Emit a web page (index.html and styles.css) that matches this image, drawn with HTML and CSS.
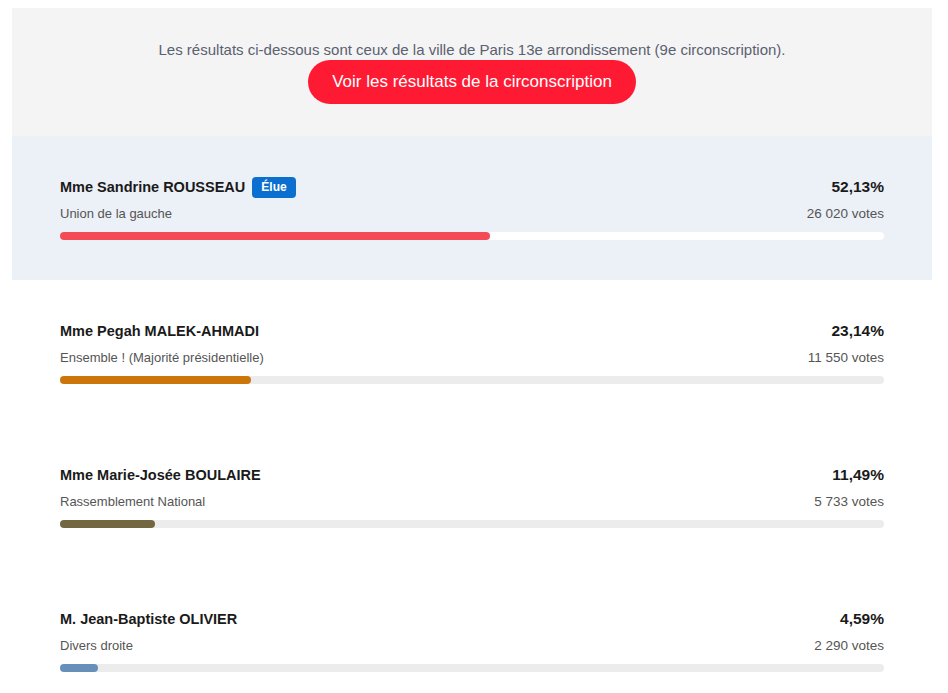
FILE: index.html
```html
<!DOCTYPE html>
<html lang="fr">
<head>
  <meta charset="UTF-8">
  <meta name="viewport" content="width=device-width, initial-scale=1.0">
  <title>Résultats Paris 13e</title>
  <link rel="stylesheet" href="styles.css">
</head>
<body>
  <div class="page">
    <div class="intro">
      <p>Les résultats ci-dessous sont ceux de la ville de Paris 13e arrondissement (9e circonscription).</p>
      <a class="btn" href="#">Voir les résultats de la circonscription</a>
    </div>

    <div class="candidat elu">
      <div class="ligne">
        <span class="nom">Mme Sandrine ROUSSEAU <span class="badge">Élue</span></span>
        <span class="pct">52,13%</span>
      </div>
      <div class="ligne">
        <span class="parti">Union de la gauche</span>
        <span class="votes">26 020 votes</span>
      </div>
      <div class="barre"><div class="remplissage nupes" style="width: 52.13%"></div></div>
    </div>

    <div class="candidat">
      <div class="ligne">
        <span class="nom">Mme Pegah MALEK-AHMADI</span>
        <span class="pct">23,14%</span>
      </div>
      <div class="ligne">
        <span class="parti">Ensemble ! (Majorité présidentielle)</span>
        <span class="votes">11 550 votes</span>
      </div>
      <div class="barre"><div class="remplissage ens" style="width: 23.14%"></div></div>
    </div>

    <div class="candidat">
      <div class="ligne">
        <span class="nom">Mme Marie-Josée BOULAIRE</span>
        <span class="pct">11,49%</span>
      </div>
      <div class="ligne">
        <span class="parti">Rassemblement National</span>
        <span class="votes">5 733 votes</span>
      </div>
      <div class="barre"><div class="remplissage rn" style="width: 11.49%"></div></div>
    </div>

    <div class="candidat">
      <div class="ligne">
        <span class="nom">M. Jean-Baptiste OLIVIER</span>
        <span class="pct">4,59%</span>
      </div>
      <div class="ligne">
        <span class="parti">Divers droite</span>
        <span class="votes">2 290 votes</span>
      </div>
      <div class="barre"><div class="remplissage dvd" style="width: 4.59%"></div></div>
    </div>
  </div>
</body>
</html>
```

FILE: styles.css
```css
body {
  font-family: 'Liberation Sans', Arial, sans-serif;
  background: #fff;
  margin: 0;
  padding: 8px 16px 0 12px;
  color: #1a1a1a;
}

.intro {
  background: #f4f4f4;
  padding: 32px 20px 32px;
  display: flex;
  flex-direction: column;
  align-items: center;
}

.intro p {
  margin: 0;
  font-size: 15px;
  line-height: 20px;
  color: #5a6170;
}

.btn {
  display: inline-block;
  padding: 0 24px;
  height: 44px;
  line-height: 44px;
  border-radius: 22px;
  background: #ff1a34;
  color: #fff;
  font-size: 17px;
  text-decoration: none;
}

.candidat {
  padding: 40px 48px;
}

.candidat.elu {
  background: #ecf0f7;
}

.ligne {
  display: flex;
  justify-content: space-between;
  align-items: center;
}

.nom {
  font-weight: bold;
  font-size: 14.5px;
  line-height: 22px;
  color: #1a1a1a;
}

.pct {
  font-weight: bold;
  font-size: 15.5px;
  line-height: 22px;
  color: #1a1a1a;
}

.badge {
  display: inline-block;
  margin-left: 3px;
  padding: 0 9px;
  height: 21px;
  line-height: 21px;
  border-radius: 4px;
  background: #0b6fcf;
  color: #fff;
  font-size: 12px;
  vertical-align: 1px;
}

.parti, .votes {
  font-size: 13px;
  line-height: 18px;
  margin-top: 7px;
  color: #555;
}

.votes {
  font-size: 13.5px;
}

.barre {
  margin-top: 9px;
  height: 8px;
  border-radius: 4px;
  background: #ececec;
}

.elu .barre {
  background: #fff;
}

.remplissage {
  height: 100%;
  border-radius: 4px;
}

.nupes { background: #f34a55; }
.ens { background: #cc760a; }
.rn { background: #736741; }
.dvd { background: #6690ba; }
```
